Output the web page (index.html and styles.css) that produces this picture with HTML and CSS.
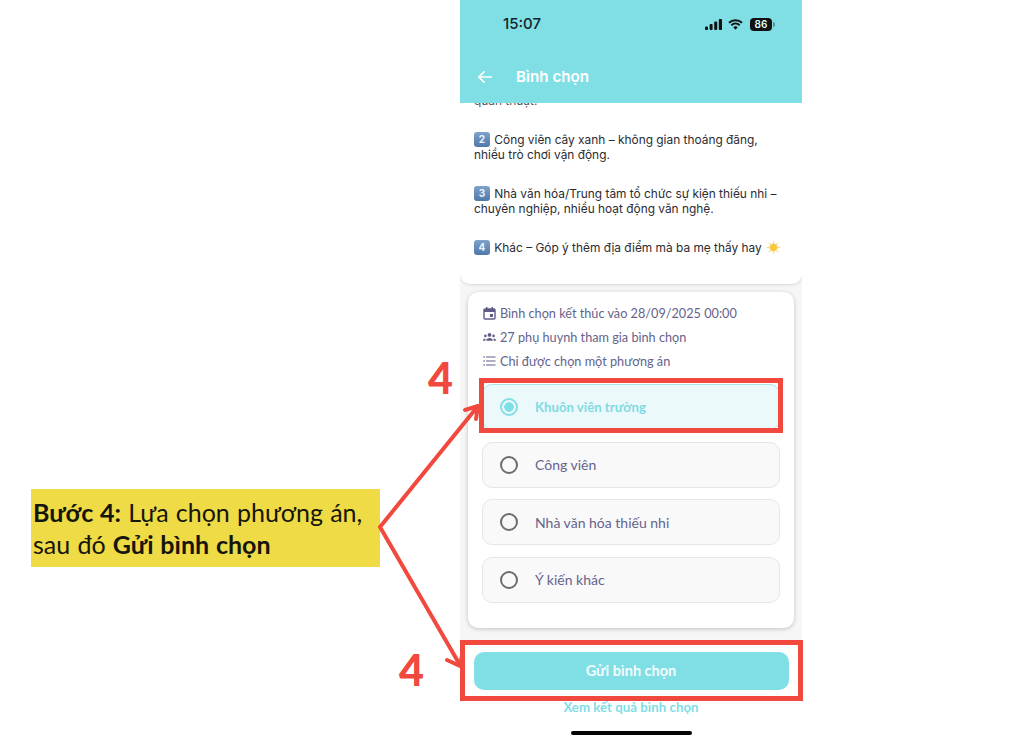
FILE: index.html
```html
<!DOCTYPE html>
<html lang="vi">
<head>
<meta charset="utf-8">
<title>Bình chọn</title>
<link rel="stylesheet" href="styles.css">
</head>
<body>
<main class="stage">
  <p class="callout"><b>Bước 4:</b> Lựa chọn phương án,<br>sau đó <b>Gửi bình chọn</b></p>

  <section class="phone">
    <header class="appbar">
      <div class="status">
        <span class="time">15:07</span>
        <div class="status-icons">
          <svg class="signal" width="17" height="11" viewBox="0 0 17 11"><rect x="0" y="7.500" width="3" height="3.500" rx="1"/><rect x="4.600" y="5" width="3" height="6" rx="1"/><rect x="9.200" y="2.500" width="3" height="8.500" rx="1"/><rect x="13.800" y="0" width="3.200" height="11" rx="1"/></svg>
          <svg class="wifi" width="15" height="11" viewBox="0 0 15 11"><path d="M1 3.800a9.500 9.500 0 0 1 13 0M3.300 6.200a6.200 6.200 0 0 1 8.400 0" fill="none" stroke="#111" stroke-width="1.900"/><path d="M5.300 8.200a3.200 3.200 0 0 1 4.400 0L7.500 10.700z" fill="#111"/></svg>
          <span class="battery">86</span>
        </div>
      </div>
      <div class="titlebar">
        <svg class="back" width="16" height="14" viewBox="0 0 16 14"><path d="M15 7H2M7.500 1.300 1.800 7l5.700 5.700" fill="none" stroke="#fff" stroke-width="1.700"/></svg>
        <h1 class="title">Bình chọn</h1>
      </div>
    </header>

    <div class="desc-card">
      <p class="cut">quản thuật.</p>
      <p class="para"><span class="key">2</span> Công viên cây xanh – không gian thoáng đãng, nhiều trò chơi vận động.</p>
      <p class="para"><span class="key">3</span> Nhà văn hóa/Trung tâm tổ chức sự kiện thiếu nhi – chuyên nghiệp, nhiều hoạt động văn nghệ.</p>
      <p class="para"><span class="key">4</span> Khác – Góp ý thêm địa điểm mà ba mẹ thấy hay <svg class="star" width="15" height="15" viewBox="0 0 15 15"><path d="M7.500 0l1.300 4.700L12.800 2l-2.300 4 4.500 1.500-4.500 1.400 2.300 4.100-4-2.700L7.500 15l-1.300-4.700-4 2.700 2.300-4.100L0 7.500 4.500 6 2.200 2l4 2.700z" fill="#f6dc8a"/><circle cx="7.500" cy="7.500" r="3.400" fill="#f9c83e"/></svg></p>
    </div>

    <div class="poll-card">
      <ul class="meta">
        <li><svg width="13" height="13" viewBox="0 0 13 13"><path d="M2 2h9a1 1 0 0 1 1 1v8a1 1 0 0 1-1 1H2a1 1 0 0 1-1-1V3a1 1 0 0 1 1-1z" fill="none" stroke="#5e5c86" stroke-width="1.400"/><path d="M1 2h11v3H1zM3 0h1.500v2H3zM8.500 0H10v2H8.500zM7 7h3v3H7z" fill="#5e5c86"/></svg>Bình chọn kết thúc vào 28/09/2025 00:00</li>
        <li><svg width="13" height="10" viewBox="0 0 14 10"><circle cx="7" cy="2.800" r="2" fill="#5e5c86"/><circle cx="2.600" cy="3.800" r="1.400" fill="#5e5c86"/><circle cx="11.400" cy="3.800" r="1.400" fill="#5e5c86"/><path d="M3.500 9c0-2 1.500-3 3.500-3s3.500 1 3.500 3zM0 9c0-1.500 1-2.300 2.700-2.300L2.500 9zM14 9c0-1.500-1-2.300-2.700-2.300l.2 2.300z" fill="#5e5c86"/></svg>27 phụ huynh tham gia bình chọn</li>
        <li><svg width="13" height="10" viewBox="0 0 13 10"><path d="M3 1h9.500M3 5h9.500M3 9h9.500" stroke="#5e5c86" stroke-width="1.200"/><path d="M.5 .3h1.200v1.400H.5zM.5 4.300h1.200v1.400H.5zM.5 8.300h1.200v1.400H.5z" fill="#5e5c86"/></svg>Chỉ được chọn một phương án</li>
      </ul>
      <div class="options">
        <div class="option selected"><span class="radio"></span>Khuôn viên trường</div>
        <div class="option"><span class="radio"></span>Công viên</div>
        <div class="option"><span class="radio"></span>Nhà văn hóa thiếu nhi</div>
        <div class="option"><span class="radio"></span>Ý kiến khác</div>
      </div>
    </div>

    <div class="actions">
      <button class="submit" type="button">Gửi bình chọn</button>
      <a class="results">Xem kết quả bình chọn</a>
      <span class="home"></span>
    </div>
  </section>
</main>

<div class="overlay">
  <svg class="arrows" width="1024" height="742" viewBox="0 0 1024 742">
    <g fill="none" stroke="#f1493d" stroke-width="4" stroke-linecap="round" stroke-linejoin="round">
      <path d="M380 527 478 406M380 527 460 665"/>
      <path d="M465 410 478 406 476 419"/>
      <path d="M447 660 460 666 463 650"/>
    </g>
  </svg>
  <span class="mark mark-top">4</span>
  <span class="mark mark-bottom">4</span>
  <span class="frame frame-top"></span>
  <span class="frame frame-bottom"></span>
</div>
</body>
</html>
```
FILE: styles.css
```css
* { box-sizing: border-box; }
html, body { margin: 0; height: 742px; overflow: hidden; background: #fff; }
body { position: relative; font-family: Lato, "Noto Sans", sans-serif; }

.stage { display: flex; align-items: flex-start; height: 742px; padding-left: 31px; }

.callout {
  flex: none; width: 349px; height: 78px; margin: 489px 0 0;
  padding: 7px 0 0 2px;
  background: #eedb45; color: #16150c;
  font-size: 25px; line-height: 32px; word-spacing: .8px;
}
.callout b { font-weight: 700; }

.phone {
  flex: none; width: 342px; height: 742px; margin-left: 80px;
  display: flex; flex-direction: column;
  background: #f6f6f6; border-radius: 0 0 10px 10px; overflow: hidden;
}

.appbar { flex: none; height: 103px; background: #80dee5; position: relative; z-index: 1; }
.status { height: 50px; display: flex; justify-content: space-between; padding: 15px 30px 0 43px; }
.time { font: 500 15px/18px Inter, sans-serif; color: #14242a; }
.status-icons { display: flex; align-items: center; gap: 6px; height: 18px; }
.signal { fill: #111; }
.battery {
  position: relative;
  width: 22px; height: 13px; margin-left: 1px; border-radius: 4px;
  background: #111; color: #dff; text-align: center;
  font: 600 10px/13px Inter, sans-serif;
}
.battery::after {
  content: ""; position: absolute; right: -3px; top: 4px;
  width: 2px; height: 5px; border-radius: 0 2px 2px 0; background: #5b8f95;
}
.titlebar { display: flex; align-items: center; height: 53px; padding: 1px 0 0 17px; }
.back { flex: none; }
.title { margin: 0 0 0 23px; color: #fff; font: 600 15.200px/20px Inter, sans-serif; }

.desc-card {
  flex: none; height: 181px; overflow: hidden;
  padding: 0 14px; background: #fff; border-radius: 0 0 10px 10px;
  box-shadow: 0 1px 3px rgba(0,0,0,.12);
  font: 400 11.900px/15px Inter, sans-serif; color: #2b2b30;
}
.cut { margin: -10px 0 0; height: 15px; color: #55555a; }
.para { margin: 24px 0 0; }
.key {
  display: inline-block; width: 16px; height: 15px; margin-right: 1px;
  border-radius: 3px; background: linear-gradient(#7ea3cc, #4f78a8); color: #eef3f9;
  text-align: center; vertical-align: top;
  font: 700 10px/15px Inter, sans-serif;
}
.star { vertical-align: top; margin-left: 1px; }

.poll-card {
  flex: none; height: 336px; margin: 8px 8px 0; padding: 12px 14px 0;
  background: #fff; border-radius: 10px;
  box-shadow: 0 1px 4px rgba(0,0,0,.22);
}
.meta {
  list-style: none; margin: 0 0 14px; padding: 0 0 0 1px;
  display: flex; flex-direction: column; gap: 6px;
  color: #65638c; font-size: 12.700px; line-height: 18px;
}
.meta li { display: flex; align-items: center; gap: 4px; height: 18px; }
.meta svg { flex: none; }

.options { display: flex; flex-direction: column; gap: 11.500px; }
.option {
  display: flex; align-items: center; height: 46px; padding-left: 17px;
  background: #f9f9f9; border: 1px solid #e6e6e8; border-radius: 10px;
  color: #65638c; font-size: 14px;
}
.radio {
  flex: none; width: 18px; height: 18px; margin-right: 17px;
  border: 2px solid #6d6d70; border-radius: 50%;
}
.selected { background: #ebf9fb; border-color: #a8e8ed; color: #7fdbe3; font-weight: 700; font-size: 13.200px; }
.selected .radio { border-color: #80dee5; background: radial-gradient(circle, #80dee5 0 4.500px, transparent 5px); }

.actions {
  flex: 1; margin-top: 12px; background: #fff;
  display: flex; flex-direction: column; align-items: center;
  padding-top: 12px; position: relative;
}
.submit {
  width: 315px; height: 38px; padding: 0; border: 0; border-radius: 10px;
  background: #80dee5; color: #f3fcfd; font: 700 14.500px/38px Lato, sans-serif;
}
.results { margin-top: 8px; color: #80dee5; font-size: 13.300px; line-height: 18px; font-weight: 700; }
.home { position: absolute; left: 111px; bottom: 7px; width: 121px; height: 4px; border-radius: 2px; background: #050505; }

.overlay { position: absolute; inset: 0; pointer-events: none; }
.arrows { position: absolute; left: 0; top: 0; }
.frame { position: absolute; border: 5px solid #f1493d; }
.frame-top { left: 479px; top: 378px; width: 304px; height: 55px; }
.frame-bottom { left: 460px; top: 640px; width: 343px; height: 61px; }
.mark { position: absolute; color: #f1493d; font: 900 43px/43px Lato, sans-serif; }
.mark-top { left: 428px; top: 356px; }
.mark-bottom { left: 399px; top: 648px; }
```
